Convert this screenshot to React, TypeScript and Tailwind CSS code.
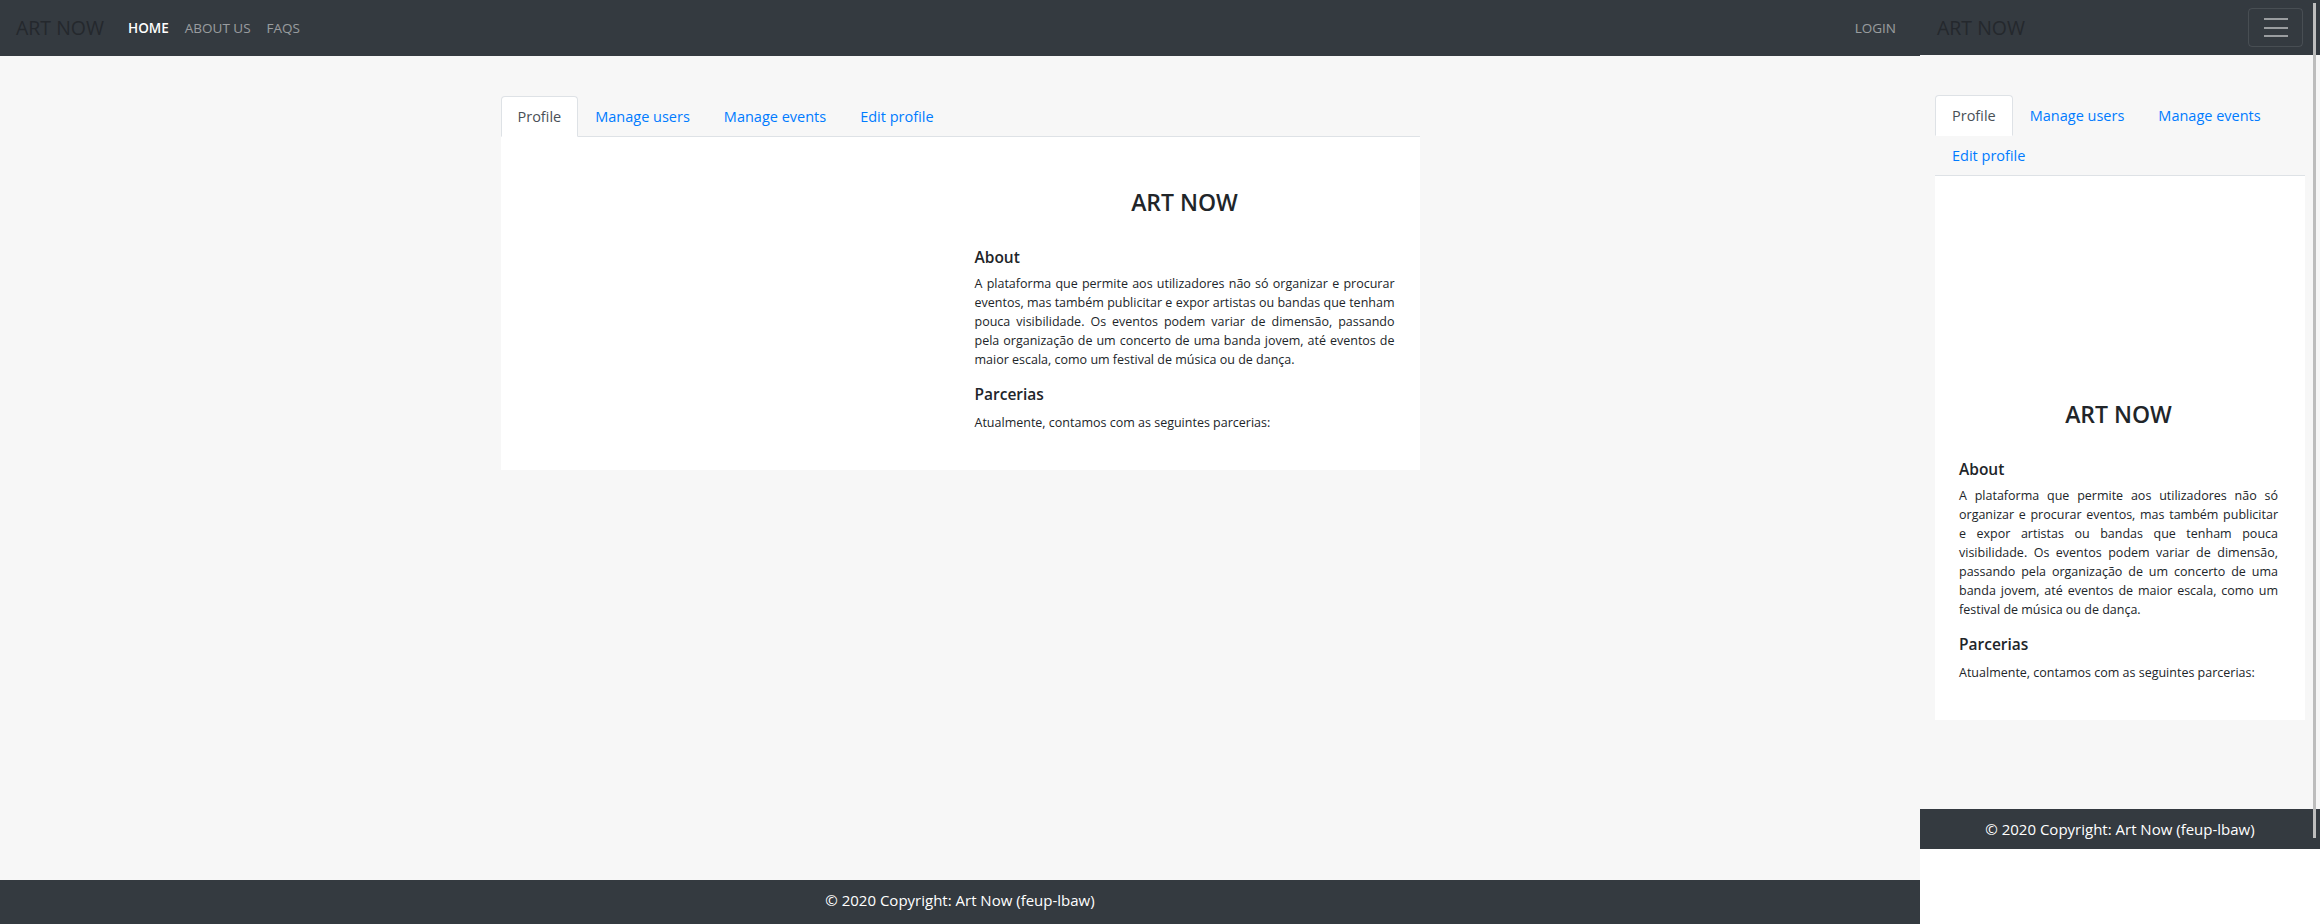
import React from "react";

const TABS = ["Profile", "Manage users", "Manage events", "Edit profile"];

function Tabs() {
  return (
    <div className="flex flex-wrap border-b border-[#dee2e6]">
      {TABS.map((t, i) =>
        i === 0 ? (
          <div
            key={t}
            className="h-[41px] -mb-px px-4 flex items-center bg-white border border-[#dee2e6] border-b-white rounded-t text-[#495057] text-[14.5px]"
          >
            {t}
          </div>
        ) : (
          <div
            key={t}
            className="h-[41px] -mb-px px-4 flex items-center border border-transparent text-[#007bff] text-[14.5px]"
          >
            {t}
          </div>
        )
      )}
    </div>
  );
}

function Content() {
  return (
    <>
      <h3 className="text-center text-[23px] font-semibold leading-[32px] text-[#212529]">ART NOW</h3>
      <h5 className="mt-[29px] text-[15.5px] font-semibold leading-5 text-[#212529]">About</h5>
      <p className="mt-[7px] text-[12.5px] leading-[19px] text-justify text-[#212529]">
        A plataforma que permite aos utilizadores não só organizar e procurar eventos, mas também
        publicitar e expor artistas ou bandas que tenham pouca visibilidade. Os eventos podem variar
        de dimensão, passando pela organização de um concerto de uma banda jovem, até eventos de
        maior escala, como um festival de música ou de dança.
      </p>
      <h5 className="mt-[15px] text-[15.5px] font-semibold leading-5 text-[#212529]">Parcerias</h5>
      <p className="mt-[9px] text-[12.5px] leading-[19px] text-[#212529]">
        Atualmente, contamos com as seguintes parcerias:
      </p>
    </>
  );
}

function Brand() {
  return <span className="text-[19.5px] leading-none text-[#24282d]">ART NOW</span>;
}

export default function App() {
  return (
    <div className="flex w-[2324px] h-[924px] bg-white font-['Open_Sans',sans-serif] text-[#212529]">
      {/* Desktop view */}
      <div className="flex flex-col w-[1920px] h-full shrink-0">
        <nav className="h-14 shrink-0 bg-[#343a40] flex items-center px-4">
          <Brand />
          <ul className="flex items-center ml-4">
            <li className="px-2 text-[13.5px] font-semibold text-white">HOME</li>
            <li className="px-2 text-[13.5px] text-white/50">ABOUT US</li>
            <li className="px-2 text-[13.5px] text-white/50">FAQS</li>
          </ul>
          <span className="ml-auto px-2 text-[13.5px] text-white/50">LOGIN</span>
        </nav>
        <main className="flex-1 bg-[#f7f7f7] pt-10">
          <div className="w-[919px] mx-auto">
            <Tabs />
            <div className="flex bg-white pt-[49px] pb-[38px]">
              <div className="flex-1" />
              <div className="w-[420px] mr-[25px]">
                <Content />
              </div>
            </div>
          </div>
        </main>
        <footer className="h-[44px] shrink-0 pb-1 bg-[#343a40] flex items-center justify-center text-white text-[15px]">
          © 2020 Copyright: Art Now (feup-lbaw)
        </footer>
      </div>

      {/* Mobile view */}
      <div className="relative w-[400px] h-full flex flex-col shrink-0">
        <nav className="h-[55px] shrink-0 bg-[#343a40] flex items-center justify-between pl-[17px] pr-[17px]">
          <Brand />
          <div className="w-[55px] h-[39px] border border-white/10 rounded flex flex-col items-center justify-center gap-[6.5px]">
            <span className="block w-6 h-[2px] bg-white/50" />
            <span className="block w-6 h-[2px] bg-white/50" />
            <span className="block w-6 h-[2px] bg-white/50" />
          </div>
        </nav>
        <main className="h-[754px] shrink-0 bg-[#f7f7f7] pt-10 px-[15px]">
          <Tabs />
          <div className="flex flex-col bg-white pl-6 pr-[27px] pt-[49px] pb-[38px]">
            <div className="h-[173px]" />
            <Content />
          </div>
        </main>
        <footer className="h-10 shrink-0 bg-[#343a40] flex items-center justify-center text-white text-[15px]">
          © 2020 Copyright: Art Now (feup-lbaw)
        </footer>
        <div className="flex-1 bg-white" />
        <div className="absolute right-[4px] top-[3px] w-[3px] h-[835px] bg-[#bdbdbd]" />
      </div>
      <div className="w-[4px] shrink-0 bg-white" />
    </div>
  );
}
